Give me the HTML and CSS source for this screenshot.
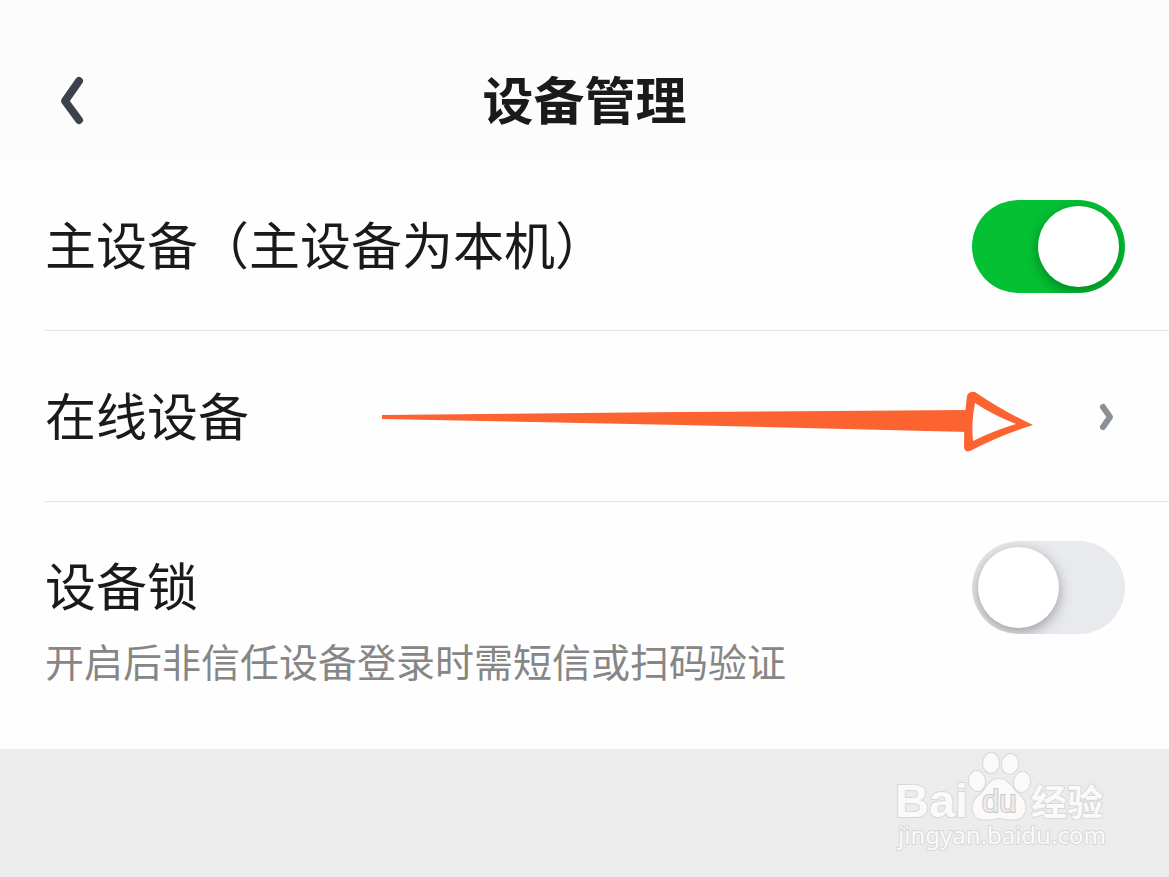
FILE: index.html
```html
<!DOCTYPE html>
<html lang="zh-CN">
<head>
    <meta charset="UTF-8">
    <meta name="viewport" content="width=device-width, initial-scale=1.0">
    <title>设备管理</title>
    <link rel="stylesheet" href="styles.css">
</head>
<body>
    <header class="header">
        <button class="back-btn" type="button" aria-label="返回">
            <svg width="28" height="52" viewBox="0 0 28 52"><path d="M19 7 L5 27 L19 46" /></svg>
        </button>
        <h1>设备管理</h1>
    </header>

    <main class="settings">
        <div class="row">
            <label for="main-device">主设备（主设备为本机）</label>
            <input type="checkbox" class="switch" id="main-device" checked>
        </div>
        <a class="row" href="#online">
            <span>在线设备</span>
            <svg class="chevron" width="20" height="32" viewBox="0 0 20 32"><path d="M6 6 L13 16 L6 26" /></svg>
            <svg class="arrow" width="654" height="64" viewBox="0 0 654 64">
                <path class="arrow-shaft" d="M1 24 L300 21 L588 19 V41 L300 34 L1 28 Z" />
                <path class="arrow-head" d="M586 5 Q588 0 594 1 Q620 19 652 34 Q620 44 589 60 Q583 62 583 55 Q583 28 586 5 Z" />
                <path class="arrow-hole" d="M594 12 Q612 24 635 33 Q612 40 592 50 Q590 32 594 12 Z" />
            </svg>
        </a>
        <div class="row row-tall">
            <div class="row-text">
                <label for="device-lock">设备锁</label>
                <p>开启后非信任设备登录时需短信或扫码验证</p>
            </div>
            <input type="checkbox" class="switch" id="device-lock">
        </div>
    </main>

    <footer class="footer">
        <svg class="watermark" width="224" height="112" viewBox="0 5 224 112">
            <text class="wm-latin" x="5" y="72">Bai</text>
            <g class="wm-paw">
                <ellipse cx="87" cy="36" rx="8" ry="10" transform="rotate(-8 87 36)" />
                <ellipse cx="101" cy="18" rx="8" ry="10" />
                <ellipse cx="120" cy="19" rx="8" ry="10" transform="rotate(10 120 19)" />
                <ellipse cx="132" cy="37" rx="8" ry="10" transform="rotate(8 132 37)" />
                <path d="M109 34 C118 34 121 42 126 47 C133 53 137 58 135 66 C132 77 122 75 109 73 C96 75 86 77 83 66 C81 58 86 53 92 48 C97 42 100 34 109 34 Z" />
            </g>
            <text class="wm-du" x="92" y="67">du</text>
            <text class="wm-cjk" x="141" y="71">经验</text>
            <text class="wm-url" x="8" y="99">jingyan.baidu.com</text>
        </svg>
    </footer>
</body>
</html>
```
FILE: styles.css
```css
:root {
    --text-color: #1a1a1a;
    --sub-color: #868686;
    --line-color: #e5e5e5;
    --switch-on: #04c133;
    --switch-off: #e9eaee;
    --arrow-color: #fb6330;
}

* {
    box-sizing: border-box;
}

body {
    margin: 0;
    min-height: 100vh;
    display: flex;
    flex-direction: column;
    font-family: 'Noto Sans CJK SC', sans-serif;
    color: var(--text-color);
    background-color: #ececec;
}

.header {
    display: grid;
    grid-template-columns: 56px 1fr 56px;
    align-items: center;
    height: 160px;
    padding: 40px 60px 0;
    background-color: #fcfcfc;
}

.header h1 {
    margin: 0;
    padding-bottom: 4px;
    font-size: 51px;
    line-height: 76px;
    font-weight: 700;
    text-align: center;
}

.back-btn {
    display: flex;
    padding: 0;
    border: none;
    background: none;
    cursor: pointer;
}

.back-btn path,
.chevron path {
    fill: none;
    stroke: #3c424d;
    stroke-width: 8;
    stroke-linecap: round;
    stroke-linejoin: round;
}

.settings {
    padding-left: 45px;
    background-color: #fefefe;
}

.row {
    position: relative;
    display: flex;
    align-items: center;
    justify-content: space-between;
    min-height: 171px;
    padding: 2px 44px 0 0;
    border-bottom: 1px solid var(--line-color);
    color: inherit;
    font-size: 51px;
    line-height: 76px;
    text-decoration: none;
}

.row > label,
.row > span {
    padding-bottom: 6px;
}

.row-tall {
    align-items: flex-start;
    min-height: 247px;
    padding-top: 39px;
    border-bottom: none;
}

.row-text {
    padding-top: 5px;
}

.row-text label {
    display: block;
}

.row-text p {
    margin: 0;
    font-size: 39px;
    color: var(--sub-color);
}

.switch {
    appearance: none;
    flex: none;
    display: flex;
    align-items: center;
    width: 153px;
    height: 93px;
    margin: 0;
    padding: 0 6px;
    border-radius: 47px;
    background-color: var(--switch-off);
    overflow: hidden;
    cursor: pointer;
}

.switch::before {
    content: '';
    width: 81px;
    height: 81px;
    border-radius: 50%;
    background-color: #fff;
    box-shadow: 0 4px 14px rgba(0, 0, 0, 0.35);
}

.switch:checked {
    justify-content: flex-end;
    background-color: var(--switch-on);
}

.chevron {
    margin-right: 8px;
}

.chevron path {
    stroke: #8b9097;
    stroke-width: 6;
}

.arrow {
    position: absolute;
    right: 134px;
    top: 60px;
}

.arrow-shaft,
.arrow-head {
    fill: var(--arrow-color);
}

.arrow-hole {
    fill: #fefefe;
}

.footer {
    display: flex;
    justify-content: flex-end;
    padding: 1px 55px 0 0;
}

.watermark {
    fill: #fafafa;
    stroke: #d8d8d8;
    stroke-width: 2;
    paint-order: stroke;
}

.wm-latin {
    font-family: 'Liberation Sans', sans-serif;
    font-size: 47px;
    font-weight: 700;
}

.wm-du {
    font-family: 'Liberation Sans', sans-serif;
    font-size: 31px;
    fill: #ececec;
    stroke: #c8c8c8;
}

.wm-cjk {
    font-size: 36px;
    font-weight: 700;
}

.wm-url {
    font-family: 'Noto Sans', sans-serif;
    font-size: 24px;
}
```
